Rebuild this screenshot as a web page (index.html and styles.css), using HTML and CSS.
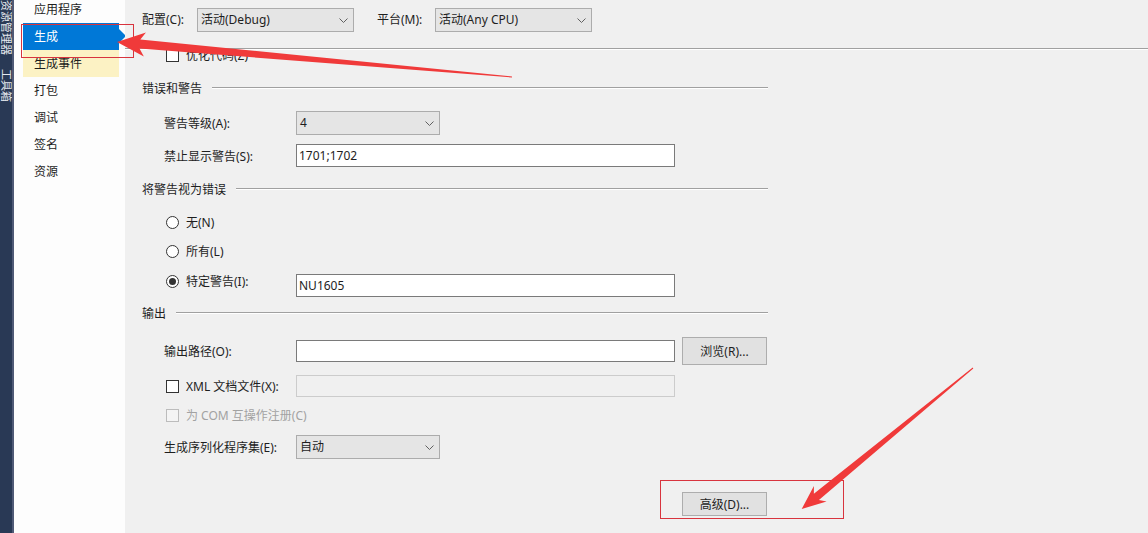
FILE: index.html
```html
<!DOCTYPE html>
<html lang="zh-CN">
<head>
<meta charset="utf-8">
<title>生成</title>
<link rel="stylesheet" href="styles.css">
</head>
<body>
<div class="app">
  <div class="strip">
    <span class="vtab t1">解决方案资源管理器</span>
    <span class="vtab t2">工具箱</span>
  </div>
  <nav class="nav">
    <div class="nav-list">
      <div class="nav-item">应用程序</div>
      <div class="nav-item active">生成</div>
      <div class="nav-item hover">生成事件</div>
      <div class="nav-item">打包</div>
      <div class="nav-item">调试</div>
      <div class="nav-item">签名</div>
      <div class="nav-item">资源</div>
    </div>
  </nav>
  <main class="main">
    <div class="topbar">
      <span class="lbl lbl-cfg">配置(C):</span>
      <div class="select sel-top"><span class="sel-text">活动(Debug)</span><svg class="chev" width="9" height="5" viewBox="0 0 9 5"><polyline points="0.5,0.5 4.5,4.5 8.5,0.5" fill="none" stroke="#606060" stroke-width="1"/></svg></div>
      <span class="lbl lbl-plat">平台(M):</span>
      <div class="select sel-top"><span class="sel-text">活动(Any CPU)</span><svg class="chev" width="9" height="5" viewBox="0 0 9 5"><polyline points="0.5,0.5 4.5,4.5 8.5,0.5" fill="none" stroke="#606060" stroke-width="1"/></svg></div>
    </div>
    <div class="sep"></div>
    <div class="scroll">
      <div class="row-opt"><span class="check"></span><span>优化代码(Z)</span></div>

      <div class="section s1"><span>错误和警告</span><i class="rule"></i></div>
      <div class="field f-level">
        <span class="flabel">警告等级(A):</span>
        <div class="select sel-small"><span class="sel-text">4</span><svg class="chev" width="9" height="5" viewBox="0 0 9 5"><polyline points="0.5,0.5 4.5,4.5 8.5,0.5" fill="none" stroke="#606060" stroke-width="1"/></svg></div>
      </div>
      <div class="field f-suppress">
        <span class="flabel">禁止显示警告(S):</span>
        <div class="input">1701;1702</div>
      </div>

      <div class="section s2"><span>将警告视为错误</span><i class="rule"></i></div>
      <div class="opt o-none"><span class="radio"></span><span>无(N)</span></div>
      <div class="opt o-all"><span class="radio"></span><span>所有(L)</span></div>
      <div class="opt o-spec">
        <span class="optlabel"><span class="radio checked"></span><span>特定警告(I):</span></span>
        <div class="input">NU1605</div>
      </div>

      <div class="section s3"><span>输出</span><i class="rule"></i></div>
      <div class="field f-path">
        <span class="flabel">输出路径(O):</span>
        <div class="input input-path"></div>
        <div class="button btn-browse">浏览(R)...</div>
      </div>
      <div class="opt o-xml">
        <span class="optlabel"><span class="check"></span><span>XML 文档文件(X):</span></span>
        <div class="input input-disabled"></div>
      </div>
      <div class="opt o-com disabled"><span class="check check-disabled"></span><span>为 COM 互操作注册(C)</span></div>
      <div class="field f-serial">
        <span class="flabel">生成序列化程序集(E):</span>
        <div class="select sel-small"><span class="sel-text">自动</span><svg class="chev" width="9" height="5" viewBox="0 0 9 5"><polyline points="0.5,0.5 4.5,4.5 8.5,0.5" fill="none" stroke="#606060" stroke-width="1"/></svg></div>
      </div>
      <div class="actions">
        <div class="button btn-adv">高级(D)...</div>
      </div>
    </div>
  </main>
</div>
<svg class="annot" width="1148" height="533" viewBox="0 0 1148 533">
  <rect x="21.5" y="24.5" width="112" height="33" fill="none" stroke="#d8343e" stroke-width="1"/>
  <rect x="660.5" y="480.5" width="183" height="38" fill="none" stroke="#d8343e" stroke-width="1"/>
  <polygon fill="#f03a3a" points="117,42 145.96,32.52 140.31,39.55 512.04,76.5 511.96,77.5 139.51,48.51 143.84,56.42"/>
  <polygon fill="#f03a3a" points="801.7,509 813.9,486.06 813.87,493.86 972.7,367.6 973.3,368.4 818.93,500.06 826.6,501.5"/>
</svg>
</body>
</html>
```

FILE: styles.css
```css
* { box-sizing: border-box; margin: 0; padding: 0; }
html, body { width: 1148px; height: 533px; overflow: hidden; }
body {
  font-family: "Noto Sans", "Noto Sans CJK SC", sans-serif;
  font-size: 12px;
  color: #1e1e1e;
  background: #f0f0f0;
  position: relative;
}
.app { display: flex; height: 533px; }

/* left dock strip */
.strip {
  width: 14px;
  flex: none;
  background: #293955;
  border-right: 2px solid #4f5a76;
  display: flex;
  flex-direction: column;
  align-items: center;
  overflow: hidden;
}
.vtab {
  writing-mode: vertical-rl;
  text-orientation: sideways;
  font-size: 11px;
  line-height: 12px;
  color: #e6e8ee;
  white-space: nowrap;
}
.t1 { margin-top: -44px; }
.t2 { margin-top: 14px; }

/* nav */
.nav {
  width: 111px;
  flex: none;
  background: #fdfdfd;
  overflow: hidden;
}
.nav-list { margin-top: -4px; }
.nav-item {
  height: 27px;
  line-height: 27px;
  margin-left: 9px;
  width: 96px;
  padding-left: 11px;
  color: #1e1e1e;
}
.nav-item.active {
  background: #0078d7;
  color: #fff;
  position: relative;
}
.nav-item.active::after {
  content: "";
  position: absolute;
  right: -7px;
  top: 6px;
  border-left: 7px solid #0078d7;
  border-top: 7px solid transparent;
  border-bottom: 7px solid transparent;
}
.nav-item.hover { background: #fcf2c4; }

/* main */
.main {
  flex: 1;
  background: #f0f0f0;
  display: flex;
  flex-direction: column;
  overflow: hidden;
}
.topbar {
  height: 48px;
  display: flex;
  align-items: flex-start;
  padding: 8px 0 0 17px;
}
.lbl { line-height: 24px; height: 24px; }
.lbl-cfg { width: 55px; }
.lbl-plat { width: 58px; margin-left: 23px; }
.sep {
  height: 2px;
  border-top: 1px solid #a0a0a0;
  border-bottom: 1px solid #ffffff;
}

.select {
  display: flex;
  align-items: center;
  justify-content: space-between;
  height: 24px;
  background: #e5e5e5;
  border: 1px solid #acacac;
  padding: 0 5px 0 3px;
}
.sel-top { width: 157px; }
.sel-small { width: 144px; }
.sel-text { line-height: 22px; }
.chev { flex: none; }

.scroll {
  flex: 1;
  overflow: hidden;
  padding-left: 17px;
}

.check {
  width: 13px;
  height: 13px;
  flex: none;
  border: 1px solid #333333;
  background: #ffffff;
}
.check-disabled { border-color: #bcbcbc; background: #f4f4f4; }
.radio {
  width: 13px;
  height: 13px;
  flex: none;
  border: 1px solid #333333;
  border-radius: 50%;
  background: #ffffff;
  display: flex;
  align-items: center;
  justify-content: center;
}
.radio.checked::after {
  content: "";
  width: 7px;
  height: 7px;
  border-radius: 50%;
  background: #333333;
}

.row-opt {
  margin-top: -5px;
  height: 20px;
  display: flex;
  align-items: center;
  gap: 7px;
  padding-left: 24px;
}

.section {
  display: flex;
  align-items: center;
  width: 626px;
  height: 20px;
}
.rule {
  flex: 1;
  height: 2px;
  margin-left: 10px;
  border-top: 1px solid #a0a0a0;
  border-bottom: 1px solid #ffffff;
}
.s1 { margin-top: 13px; }
.s2 { margin-top: 12px; }
.s3 { margin-top: 6px; }

.field {
  display: flex;
  align-items: center;
  padding-left: 22px;
}
.flabel { width: 132px; flex: none; }
.f-level { margin-top: 13px; height: 24px; }
.f-suppress { margin-top: 9px; height: 23px; }
.f-path { margin-top: 14px; height: 28px; }
.f-serial { margin-top: 10px; height: 24px; }

.input {
  width: 379px;
  height: 23px;
  background: #ffffff;
  border: 1px solid #7a7a7a;
  padding-left: 2px;
  line-height: 21px;
}
.input-path { height: 22px; }
.input-disabled {
  height: 22px;
  background: #f0f0f0;
  border-color: #cccccc;
}

.opt {
  display: flex;
  align-items: center;
  padding-left: 24px;
  height: 20px;
  gap: 7px;
}
.optlabel {
  width: 130px;
  flex: none;
  display: flex;
  align-items: center;
  gap: 7px;
}
.o-none { margin-top: 13px; }
.o-all { margin-top: 9px; }
.o-spec { margin-top: 13px; height: 23px; align-items: flex-start; gap: 0; }
.o-spec .optlabel { height: 15px; line-height: 15px; }
.o-xml { margin-top: 10px; height: 22px; gap: 0; }
.o-com { margin-top: 8px; }
.disabled { color: #a2a2a2; }

.button {
  width: 85px;
  flex: none;
  background: #e1e1e1;
  border: 1px solid #adadad;
  display: flex;
  align-items: center;
  justify-content: center;
}
.btn-browse { height: 28px; margin-left: 7px; }
.actions {
  margin-top: 33px;
  width: 625px;
  display: flex;
  justify-content: flex-end;
}
.btn-adv { height: 24px; }

.annot {
  position: absolute;
  left: 0;
  top: 0;
  pointer-events: none;
}
```
